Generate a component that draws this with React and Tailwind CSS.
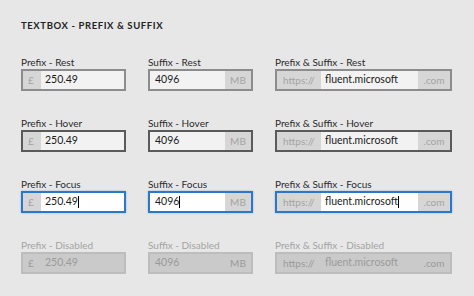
import React from 'react'

const FONT = 'Lato, "Noto Sans", Arial, sans-serif'

const STATES = ['Rest', 'Hover', 'Focus', 'Disabled']

// box border / bg per state
const boxStyles = {
  Rest: 'border-[#8c8c8c] bg-[#f2f2f2]',
  Hover: 'border-[#5a5a5a] bg-[#f2f2f2]',
  Focus: 'border-[#2b78c8] bg-white shadow-[0_0_2px_rgba(43,120,200,0.4)]',
  Disabled: 'border-[#bdbdbd] bg-[#cacaca]',
}

function Addon({ children, state, className = '' }) {
  const disabled = state === 'Disabled'
  return (
    <div
      className={`flex h-full items-center shrink-0 text-[10px] ${
        disabled ? 'text-[#9a9a9a]' : 'bg-[#d6d6d6] text-[#a3a3a3]'
      } ${className}`}
    >
      {children}
    </div>
  )
}

function Value({ children, state, pad = 'pl-[4px]' }) {
  const disabled = state === 'Disabled'
  return (
    <div className={`flex flex-1 min-w-0 h-full items-center ${pad}`}>
      <span className={`text-[10.5px] ${disabled ? 'text-[#9a9a9a]' : 'text-[#1b1b1b]'}`}>
        {children}
      </span>
      {state === 'Focus' && <span className="w-px h-[12px] bg-black" />}
    </div>
  )
}

function Box({ state, children }) {
  return (
    <div className={`flex h-[22px] items-center border-2 overflow-hidden ${boxStyles[state]}`}>
      {children}
    </div>
  )
}

function Field({ label, state, children }) {
  const disabled = state === 'Disabled'
  return (
    <div className="flex flex-col">
      <div className={`text-[10px] leading-[14px] ${disabled ? 'text-[#a3a3a3]' : 'text-[#2a2a2a]'}`}>
        {label} - {state}
      </div>
      <Box state={state}>{children}</Box>
    </div>
  )
}

export default function App() {
  return (
    <div
      className="w-[474px] h-[296px] bg-[#e7e7e7] pl-[21px] pt-[19px] overflow-hidden"
      style={{ fontFamily: FONT }}
    >
      <div className="text-[9.5px] font-bold tracking-[0.6px] text-[#222] leading-[14px]">
        TEXTBOX - PREFIX &amp; SUFFIX
      </div>

      <div className="mt-[22px] grid grid-cols-[105px_105px_177px] gap-x-[22px] gap-y-[25px]">
        {STATES.map((s) => (
          <React.Fragment key={s}>
            <Field label="Prefix" state={s}>
              <Addon state={s} className="w-[18px] pl-[5px]">£</Addon>
              <Value state={s}>250.49</Value>
            </Field>
            <Field label="Suffix" state={s}>
              <Value state={s} pad="pl-[5px]">4096</Value>
              <Addon state={s} className="w-[26px] justify-center">MB</Addon>
            </Field>
            <Field label="Prefix & Suffix" state={s}>
              <Addon state={s} className="w-[44px] pl-[6px]">https://</Addon>
              <Value state={s}>fluent.microsoft</Value>
              <Addon state={s} className="w-[32px] justify-center">.com</Addon>
            </Field>
          </React.Fragment>
        ))}
      </div>
    </div>
  )
}
